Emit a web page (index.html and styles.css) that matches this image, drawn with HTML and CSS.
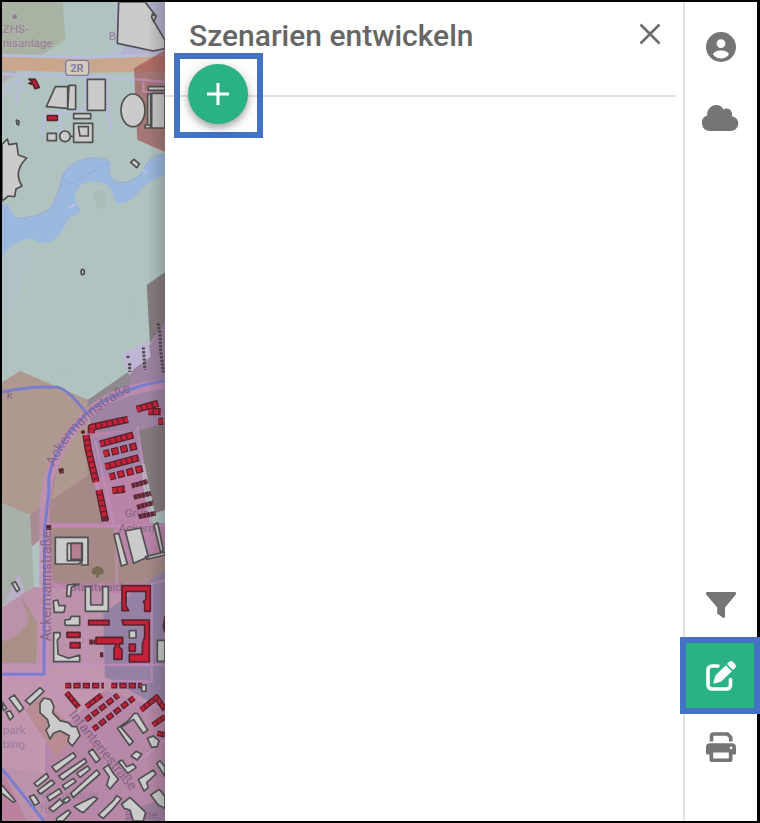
FILE: index.html
```html
<!DOCTYPE html>
<html lang="de">
<head>
<meta charset="utf-8">
<meta name="viewport" content="width=device-width, initial-scale=1">
<title>Szenarien entwickeln</title>
<link rel="stylesheet" href="styles.css">
</head>
<body>
<div class="app">
  <section class="map" aria-label="Karte">
    <svg class="map-canvas" viewBox="6 6 489 2457" preserveAspectRatio="xMinYMin slice">
      <!-- land use -->
      <rect class="land" x="6" y="6" width="1400" height="2457"/>
      <path fill="#a9b3a3" d="M6 6H188L196 120 6 240z"/>
      <path fill="#b5aeb4" d="M6 215H55L6 250z"/>
      <path fill="#b3b2cf" d="M440 6H495V165H360L380 120z"/>
      <path fill="#b0c2c6" d="M40 740Q90 730 98 790L62 840 50 920 6 945V770z"/>
      <path fill="#a9beb8" d="M275 578Q315 560 322 590L315 625 295 628z"/>
      <path fill="#adc1bd" d="M380 905Q400 890 405 920L398 955 382 945zM180 1115Q205 1095 212 1112L190 1135z"/>
      <path fill="#9bb9df" d="M6 613 25 615Q40 650 52 654 100 656 148 628 175 590 184 540 200 478 285 473 325 475 331 492 318 518 345 545 410 560 440 490 462 465 495 462V526Q440 540 405 590 360 625 343 600 338 545 280 545 235 545 224 585 226 605 241 626L235 642 208 652Q180 712 155 724 120 738 95 715 35 725 6 768z"/>
      <path class="shore" d="M50 655Q100 656 148 628 175 590 184 540 200 478 285 473 325 475 331 492M188 540 215 550 325 488M331 500Q318 518 345 545 410 560 440 490 462 465 495 462"/>
      <path stroke="#b9bfe2" stroke-width="6" d="M205 625 230 610M428 510 440 520"/>
      <path fill="#ae9890" d="M6 1147 60 1113 265 1200 275 1440 90 1545 6 1510z"/>
      <path fill="#9e83a2" d="M263 1200 385 1130 440 1050 495 960V1290L410 1295 430 1450H290z"/>
      <path fill="#857c7f" d="M440 855 495 817V965L450 1030z"/>
      <path fill="#beb6d2" d="M365 1065 445 1022 452 1070 390 1115 378 1110z"/>
      <path fill="#908890" d="M263 1200 385 1115 392 1145 262 1230z"/>
      <path fill="#b884a8" d="M270 1250Q180 1340 145 1450L135 1570V2463H495V1570H450L400 1290 245 1300z"/>
      <path fill="#a58987" d="M245 1300 310 1568H145L155 1440z"/>
      <path fill="#ae9890" d="M250 1260Q170 1350 155 1500L265 1425z"/>
      <path fill="#a286aa" d="M275 1315 410 1285 435 1390 300 1430z"/>
      <path fill="#857a7e" d="M412 1293 495 1270V1530L465 1540z"/>
      <path fill="#a7b1aa" d="M6 1510 90 1545 102 1760 6 1823z"/>
      <path fill="#a78b92" d="M90 1545 145 1505 130 1610 95 1640z"/>
      <path fill="#bab0c5" d="M55 1720 75 1780 6 1823 45 1740z"/>
      <path fill="#bc92ab" d="M102 1760 6 1823V2463H495V1790z"/>
      <path fill="#aa9187" d="M6 1925Q80 1900 85 1850L60 1780 112 1870 108 1990H6z"/>
      <path fill="#a58987" d="M145 1583H340L365 1690 495 1670V1750H160z"/>
      <path fill="#9581a4" d="M310 1840 495 1710V2130L315 2030z"/>
      <path fill="#c296af" d="M6 1995H310L315 2080 135 2230V2320L6 2300z"/>
      <path fill="#b687a6" d="M135 2230 315 2070 495 2130V2463H135z"/>
      <path fill="#b98c91" d="M75 2130 125 2090 235 2200 170 2270z"/>
      <path fill="#ba829e" d="M6 2305 80 2463H6z"/>
      <path fill="#9c7e9d" d="M375 2463 400 2430 495 2390V2463z"/>

      <!-- streets -->
      <path fill="#caa78c" d="M6 170 260 177 495 168V215L260 218 6 210z"/>
      <path class="street" d="M6 222 260 228 495 246M6 166 250 172 495 164M352 6V172M6 280 60 235 65 262 47 280 52 312M190 230V250M257 230V330L135 345 125 405M320 240 322 330 333 395M180 345V400"/>
      <path fill="#a04f4f" opacity=".65" d="M402 205 495 150V455L412 420z"/>
      <path class="lane" d="M430 245V275H495M402 237 495 246"/>
      <path class="lane wide" d="M495 1152Q330 1170 260 1245 130 1370 133 1560V2025H6"/>
      <path class="lane" d="M250 1300 320 1570M150 1578H495M285 1320 340 1570M412 1280 455 1570M160 1750 255 1810 495 1740M255 1800V2000M130 2040 330 2250M6 2035 460 2045M495 2220 330 2350M6 2180 150 2050M6 1995H495M350 1590V1750M455 1750V2040"/>
      <path class="route" d="M495 1142Q350 1165 260 1240 190 1150 160 1162 100 1158 6 1176M260 1240Q135 1370 147 1470L134 1590 132 2023H6M6 2306 132 2463"/>

      <!-- map labels -->
      <g class="label">
        <circle cx="44" cy="50" r="7"/>
        <text x="8" y="98">ZHS-</text>
        <text x="8" y="142">nisanlage</text>
        <text x="326" y="120">B</text>
        <text class="dark" x="20" y="1196">k</text>
        <path id="arc" class="guide" d="M162 1400Q230 1245 420 1162"/>
        <text class="dark street-name"><textPath href="#arc">Ackermannstraße</textPath></text>
        <text class="dark street-name" transform="translate(154 1924) rotate(-90)">Ackermannstraße</text>
        <text class="dark" x="374" y="1552">Grün</text>
        <text class="dark" x="356" y="1595">Ackerm</text>
        <text class="dark" x="210" y="1774">Stadtwald</text>
        <text x="8" y="2202">park</text>
        <text x="8" y="2245">bing</text>
        <text class="dark street-name" transform="translate(205 2144) rotate(51)">Infanteriestraße</text>
        <text x="110" y="2398">Hochschule</text>
        <text x="120" y="2440">für</text>
        <text class="dark" x="374" y="2456">Bunde</text>
      </g>
      <g>
        <rect x="197" y="181" width="69" height="45" rx="8" fill="#d4cbb9" stroke="#8280a5" stroke-width="4"/>
        <text class="shield" x="231" y="215" text-anchor="middle">2R</text>
      </g>
      <path fill="#756952" d="M275 1718Q275 1705 285 1702 292 1695 302 1702 312 1706 311 1720 300 1728 296 1722V1734H289V1723Q280 1727 275 1718z"/>

      <!-- buildings north -->
      <g class="building">
        <path d="M356 6 352 130 460 153 495 146V120L460 62 468 48 435 6z"/>
        <path d="M457 42 468 48 462 65 455 52z"/>
        <path d="M166 260H203V325L139 320zM207 256H227V328H203zM262 238H316V331H262zM221 341H272V356H221zM221 370H278V427H221zM235 380H265V408H240zM142 400H169V422H142z"/>
        <circle cx="195" cy="409" r="16"/><path d="M211 409H220"/>
        <ellipse cx="399" cy="331" rx="36" ry="49"/>
        <path d="M445 260H495V271H445zM455 280H495V384H455zM443 282H452V375H443zM435 375H451V384H435zM402 478 418 492 410 503 392 487zM49 360 57 364 56 375 51 373z"/>
        <path d="M6 433 22 417 27 434 50 430 55 465 80 474Q38 515 66 558L48 567 44 590 25 588 6 603z"/>
        <ellipse cx="248" cy="816" rx="5" ry="8"/>
      </g>
      <g class="building selected">
        <path d="M142 347H172V361H142zM87 237 106 238 118 262 105 266 100 254 87 250 98 246z"/>
      </g>
      <path class="sheds" d="M384 1067V1076M389 1090V1116M430 1042 435 1110M474 970 480 1000 482 1050 490 1118"/>

      <!-- Ackermann quarter -->
      <defs>
        <path id="terraces-dense" d="M274 1300V1282L384 1258M410 1228 475 1210M445 1235H482M300 1332 400 1305M316 1400 416 1373M258 1305 265 1350 288 1446M297 1470 316 1562M337 1472 375 1467M475 1264H490"/>
        <path id="terraces-spaced" d="M311 1362 412 1337M329 1431 430 1405"/>
        <path id="rows-dense" d="M199 2078 236 2122M259 2120 305 2085M423 2130 470 2092 495 2130M459 2175 495 2150M472 2200 495 2205"/>
        <path id="rows-spaced" d="M196 2057H312M334 2057H425M258 2160 355 2085M280 2188 402 2093"/>
      </defs>
      <use class="terrace-edge" href="#terraces-dense"/>
      <use class="terrace" href="#terraces-dense"/>
      <use class="terrace-edge spaced" href="#terraces-spaced"/>
      <use class="terrace spaced" href="#terraces-spaced"/>
      <path class="sheds large" d="M395 1458 443 1444M401 1492 453 1480M411 1522 460 1508M416 1550 467 1540M182 1405 186 1420M305 1557H325M146 1575V1590"/>
      <circle cx="249" cy="1296" r="6" fill="#55272c"/>

      <!-- buildings south -->
      <g class="building">
        <path d="M166 1612H264V1695H245V1685L235 1692H166zM202 1630H247V1682H202zM342 1603 356 1600 382 1692 364 1698zM376 1593 422 1584 445 1670 401 1690zM462 1575 473 1568 490 1650 482 1658zM436 1670 495 1656V1665L440 1678z"/>
        <path d="M202 1755 237 1752 214 1762 212 1789H200zM256 1760H272V1815H308V1760H325V1834H256zM160 1803 173 1800 177 1817H196L192 1837H163zM194 1860 210 1858 214 1849H239V1876H196zM161 1898H180V1910L172 1920 174 1963 205 1975 239 1965V1985H161zM388 1892H408V1914H388zM472 1921H495V1984H472zM36 1750 46 1745 59 1768 50 1775z"/>
        <path fill="#b77f92" d="M213 1630H245V1678H213z"/>
      </g>
      <g class="building selected">
        <path d="M366 1757H451V1834H434V1812L430 1805 438 1798V1774H378V1818L386 1832H366zM266 1861H327V1875H266zM366 1860H448V1986H388V1963H427V1934L434 1910V1875H370zM288 1912H368V1931H358V1942L366 1948V1978H342V1945L350 1932H288zM201 1897H240V1912H201zM211 1928H240V1944H211zM388 1932H406V1954H388zM490 1880 495 1850V1895z"/>
      </g>
      <path class="sheds large" d="M268 1926H286M300 1964H310"/>

      <!-- Infanteriestraße quarter -->
      <use class="terrace-edge row" href="#rows-dense"/>
      <use class="terrace row" href="#rows-dense"/>
      <use class="terrace-edge row spaced" href="#rows-spaced"/>
      <use class="terrace row spaced" href="#rows-spaced"/>
      <g class="building">
        <path d="M27 2095 43 2085 71 2125 58 2136zM76 2102 120 2063 132 2074 90 2114zM6 2105 20 2125 10 2132zM18 2137 30 2132 40 2150 30 2160zM120 2110 132 2094 152 2099 162 2120 158 2138 180 2162 205 2168 217 2180H230L240 2207 217 2238 204 2224 208 2207 180 2192 160 2200 150 2217 138 2190 148 2178 142 2158 120 2138z"/>
        <path d="M156 2300 220 2258 228 2270 168 2316zM176 2328 254 2276 260 2286 188 2340zM102 2350 140 2320 146 2332 112 2360zM112 2372 155 2340 164 2350 122 2382zM141 2390 178 2366 185 2378 148 2403zM187 2356 220 2335 228 2345 195 2368zM212 2380 290 2310 300 2322 220 2392zM230 2320 263 2298 270 2308 240 2332zM265 2256 278 2247 300 2278 288 2288zM147 2425 180 2397 190 2410 160 2435zM170 2455 205 2430 212 2438 190 2463H170zM190 2400 204 2390 210 2400 196 2410zM88 2390 102 2384 118 2408 104 2417z"/>
        <path d="M352 2185 385 2162 403 2140 412 2140 443 2190 430 2200 400 2158 363 2182 400 2225 388 2236zM310 2305 325 2295 340 2320 355 2338 330 2367 320 2355 328 2330zM222 2420 236 2412 282 2390 293 2396 250 2438 240 2433zM295 2445 340 2402 350 2387 364 2396 340 2425 310 2455zM355 2285 366 2280 380 2300 400 2292 408 2303 383 2320zM393 2268 408 2254 425 2262 412 2280zM415 2338 460 2310 468 2322 440 2348 445 2363 432 2373zM470 2290 480 2282 495 2300V2330zM452 2385 478 2368 495 2390V2425L475 2415zM442 2215 460 2208 477 2222 472 2240 455 2242zM380 2400 390 2392 437 2437 430 2463H400L390 2430 372 2425 365 2412z"/>
        <path d="M425 2055H438V2074H425zM6 2355 46 2403 40 2407 6 2380"/>
      </g>
    </svg>
  </section>

  <main class="panel">
    <header class="panel-header">
      <h1 class="panel-title">Szenarien entwickeln</h1>
      <button class="close" type="button" aria-label="Schließen">
        <svg width="22" height="22" viewBox="0 0 22 22"><path d="M1.500 1.500 20.500 20.500M20.500 1.500 1.500 20.500" stroke="#6d6d6d" stroke-width="2.600"/></svg>
      </button>
    </header>
    <div class="actions">
      <div class="highlight">
        <button class="fab" type="button" aria-label="Szenario hinzufügen">
          <svg width="22" height="22" viewBox="0 0 22 22"><path d="M11 0V22M0 11H22" stroke="#fff" stroke-width="3"/></svg>
        </button>
      </div>
    </div>
  </main>

  <nav class="sidebar" aria-label="Werkzeuge">
    <div class="group">
      <button class="tool" type="button" aria-label="Konto">
        <svg width="30" height="30" viewBox="0 0 30 30"><path fill="currentColor" fill-rule="evenodd" d="M15 0a15 15 0 1 1 0 30 15 15 0 0 1 0-30zM15 7.200a4.400 4.400 0 1 0 0 8.800 4.400 4.400 0 0 0 0-8.800zM15 18.500c-4.500 0-7.800 2-7.800 4 1.800 2.600 4.500 4 7.800 4s6-1.400 7.800-4c0-2-3.300-4-7.800-4z"/></svg>
      </button>
      <button class="tool" type="button" aria-label="Cloud">
        <svg width="40" height="26" viewBox="0 0 40 26"><path fill="currentColor" d="M8 26A8.200 8.200 0 0 1 6.200 10.200C5.800 4.500 10 0 15.500 0 18.600 0 21 1.600 22.600 4.400 26.500 1.600 32 4.800 31 11.200 34.800 12 37.300 14.800 37.300 18.300 37.300 22.600 34 26 29.700 26z"/></svg>
      </button>
    </div>
    <div class="group">
      <button class="tool" type="button" aria-label="Filter">
        <svg width="30" height="26" viewBox="0 0 30 26"><path fill="currentColor" d="M1.500 0H28.500C30 0 30.500 1.600 29.600 2.700L19 15.500V24.500C19 26 17.600 26.300 16.600 25.600L12.200 22.300C11.400 21.700 11.200 21.200 11.200 20.400V15.500L.4 2.700C-.5 1.600 0 0 1.500 0z"/></svg>
      </button>
      <button class="tool active" type="button" aria-label="Szenarien entwickeln" aria-pressed="true">
        <svg width="30" height="30" viewBox="0 0 30 30"><path fill="none" stroke="currentColor" stroke-width="3.600" stroke-linecap="round" d="M12 5H6.500Q2 5 2 9.500V23.500Q2 28 6.500 28H20Q24.500 28 24.500 23.500V18.500"/><path fill="currentColor" d="M19.800 4.200 25.800 10.200 15.300 20.600 9 22.400Q7.200 22.700 7.600 21L9.400 14.600zM21 3 23 1Q25-.8 27 1L29 3Q30.800 5 29 7L27 9z"/></svg>
      </button>
      <button class="tool" type="button" aria-label="Drucken">
        <svg width="30" height="30" viewBox="0 0 30 30"><path fill="none" stroke="currentColor" stroke-width="3.600" d="M5.500 9.500V4Q5.500 2 7.500 2H21.500L24.700 5.200V9.500"/><path fill="currentColor" fill-rule="evenodd" d="M4 11.300H26Q30 11.300 30 15.300V21.500Q30 22.500 29 22.500H26.500V28Q26.500 30 24.500 30H5.500Q3.500 30 3.500 28V22.500H1Q0 22.500 0 21.500V15.300Q0 11.300 4 11.300zM7.200 20.500V26.400H22.800V20.500zM25 14.500a1.400 1.400 0 1 0 .1 0z"/></svg>
      </button>
    </div>
  </nav>
</div>
</body>
</html>
```
FILE: styles.css
```css
:root {
  --green: #2ab282;
  --blue: #4472c4;
  --grey: #757575;
  --line: #e2e2e2;
}

* {
  box-sizing: border-box;
}

body {
  margin: 0;
  background: #000;
  font-family: Roboto, sans-serif;
}

button {
  padding: 0;
  border: 0;
  background: none;
  cursor: pointer;
}

.app {
  display: grid;
  grid-template-columns: minmax(0, 163fr) minmax(0, 518fr) 74px;
  min-height: 100vh;
  padding: 2px 3px 2px 2px;
}

/* Map */
.map {
  position: relative;
  overflow: hidden;
  background: #b0c3c1;
}

.map::after {
  content: "";
  position: absolute;
  inset: 0 0 0 auto;
  width: 18px;
  background: linear-gradient(to right, transparent, rgba(40, 40, 40, 0.22));
}

.map-canvas {
  position: absolute;
  width: 100%;
  height: 100%;
}

.map-canvas path {
  stroke-linejoin: round;
}

.land {
  fill: #b0c3c1;
}

.map-canvas .shore {
  fill: none;
  stroke: #9a9fd0;
  stroke-width: 2;
}

.street {
  fill: none;
  stroke: #b9bcda;
  stroke-width: 8;
}

.lane {
  fill: none;
  stroke: #c58fba;
  stroke-width: 7;
  opacity: 0.7;
}

.wide {
  stroke-width: 30;
}

.route {
  fill: none;
  stroke: #797dcc;
  stroke-width: 9;
}

.building {
  fill: #cbcbcb;
  stroke: #505050;
  stroke-width: 5;
}

.selected {
  fill: #c52037;
  stroke: #5a222c;
}

.terrace {
  fill: none;
  stroke: #c52037;
  stroke-width: 14;
  stroke-dasharray: 13 4;
}

.terrace-edge {
  fill: none;
  stroke: #5a222c;
  stroke-width: 22;
}

.terrace.spaced {
  stroke-width: 15;
  stroke-dasharray: 14 14;
}

.terrace-edge.spaced {
  stroke-dasharray: 22 6;
  stroke-dashoffset: 4;
}

.terrace.row {
  stroke-width: 9;
}

.terrace-edge.row {
  stroke-width: 17;
}

.sheds {
  fill: none;
  stroke: #4e4750;
  stroke-width: 9;
  stroke-dasharray: 7 4;
}

.large {
  stroke: #5e2735;
  stroke-width: 15;
  stroke-dasharray: 11 1;
}

.label {
  fill: #9c7c9c;
  font-size: 35px;
}

.label .dark {
  fill: #876583;
}

.label .street-name {
  font-size: 42px;
}

.guide {
  fill: none;
}

.shield {
  fill: #8280a5;
  font-size: 33px;
  font-weight: 700;
}

/* Panel */
.panel {
  background: #fff;
}

.panel-header {
  display: flex;
  align-items: flex-start;
  justify-content: space-between;
  padding: 17px 18px 0 24px;
}

.panel-title {
  margin: 0;
  color: #666;
  font-size: 30px;
  font-weight: 500;
  line-height: 34px;
}

.close {
  display: grid;
  place-items: center;
  width: 30px;
  height: 30px;
}

.actions {
  position: relative;
  padding-left: 9px;
}

.actions::before {
  content: "";
  position: absolute;
  top: 42px;
  left: 0;
  right: 7px;
  height: 2px;
  background: var(--line);
}

.highlight {
  position: relative;
  display: flex;
  width: 89px;
  height: 85px;
  padding: 5px 8px;
  border: 6px solid var(--blue);
}

.fab {
  display: grid;
  place-items: center;
  width: 60px;
  height: 60px;
  border-radius: 50%;
  background: var(--green);
  box-shadow: 0 4px 6px rgba(0, 0, 0, 0.28), 0 2px 18px rgba(0, 0, 0, 0.12);
}

/* Sidebar */
.sidebar {
  display: flex;
  flex-direction: column;
  justify-content: space-between;
  padding: 9px 0 39px;
  border-left: 2px solid var(--line);
  background: #fff;
}

.group {
  display: flex;
  flex-direction: column;
}

.tool {
  position: relative;
  display: grid;
  place-items: center;
  width: 100%;
  height: 71px;
  color: var(--grey);
}

.active {
  background: var(--green);
  color: #fff;
}

.active::after {
  content: "";
  position: absolute;
  inset: -3px -3px -3px -5px;
  border: 6px solid var(--blue);
}
```
